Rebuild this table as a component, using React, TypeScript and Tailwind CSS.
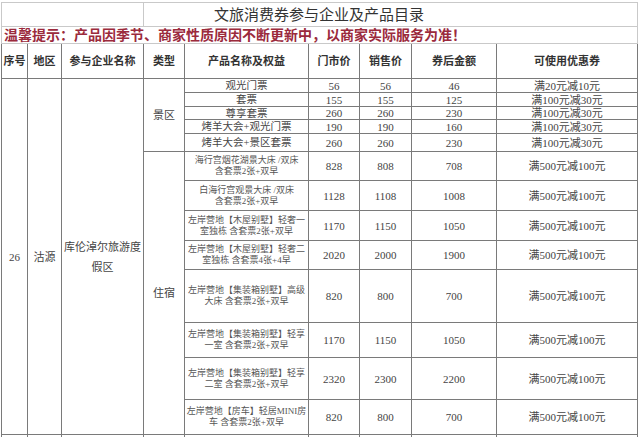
import React from 'react';

type Row = { name: string[]; market: string; sale: string; after: string; coupon: string; h: string };

const scenic: Row[] = [
  { name: ['观光门票'], market: '56', sale: '56', after: '46', coupon: '满20元减10元', h: 'h-[14px]' },
  { name: ['套票'], market: '155', sale: '155', after: '125', coupon: '满100元减30元', h: 'h-[14px]' },
  { name: ['尊享套票'], market: '260', sale: '260', after: '230', coupon: '满100元减30元', h: 'h-[13px]' },
  { name: ['烤羊大会+观光门票'], market: '190', sale: '190', after: '160', coupon: '满100元减30元', h: 'h-[14px]' },
  { name: ['烤羊大会+景区套票'], market: '260', sale: '260', after: '230', coupon: '满100元减30元', h: 'h-[18px]' },
];

const stay: Row[] = [
  { name: ['海行宫烟花湖景大床 /双床', '含套票2张+双早'], market: '828', sale: '808', after: '708', coupon: '满500元减100元', h: 'h-[29px]' },
  { name: ['白海行宫观景大床 /双床', '含套票2张+双早'], market: '1128', sale: '1108', after: '1008', coupon: '满500元减100元', h: 'h-[30px]' },
  { name: ['左岸营地【木屋别墅】轻奢一', '室独栋 含套票2张+双早'], market: '1170', sale: '1150', after: '1050', coupon: '满500元减100元', h: 'h-[30px]' },
  { name: ['左岸营地【木屋别墅】轻奢二', '室独栋 含套票4张+4早'], market: '2020', sale: '2000', after: '1900', coupon: '满500元减100元', h: 'h-[29px]' },
  { name: ['左岸营地【集装箱别墅】高级', '大床 含套票2张+双早'], market: '820', sale: '800', after: '700', coupon: '满500元减100元', h: 'h-[53px]' },
  { name: ['左岸营地【集装箱别墅】轻享', '一室 含套票2张+双早'], market: '1170', sale: '1150', after: '1050', coupon: '满500元减100元', h: 'h-[35px]' },
  { name: ['左岸营地【集装箱别墅】轻享', '二室 含套票2张+双早'], market: '2320', sale: '2300', after: '2200', coupon: '满500元减100元', h: 'h-[42px]' },
  { name: ['左岸营地【房车】轻居MINI房', '车 含套票2张+双早'], market: '820', sale: '800', after: '700', coupon: '满500元减100元', h: 'h-[35px]' },
];

const cell = 'border border-[#7a7a7a] p-0 text-center align-middle';
const num = 'text-[11px] leading-[12px] text-[#444]';

function ValueCells({ r }: { r: Row }) {
  return (
    <>
      <td className={`${cell} ${num}`}>{r.market}</td>
      <td className={`${cell} ${num}`}>{r.sale}</td>
      <td className={`${cell} ${num}`}>{r.after}</td>
      <td className={`${cell} ${num}`}>{r.coupon}</td>
    </>
  );
}

export default function App() {
  const total = scenic.length + stay.length;

  return (
    <div
      className="bg-white w-[640px] h-[437px] overflow-hidden pl-[1px] pt-[2px]"
      style={{ fontFamily: '"Liberation Serif", "Noto Sans CJK SC", serif' }}
    >
      <table className="border-collapse table-fixed w-[636px]">
        <colgroup>
          <col className="w-[26px]" />
          <col className="w-[34px]" />
          <col className="w-[82px]" />
          <col className="w-[41px]" />
          <col className="w-[124px]" />
          <col className="w-[51px]" />
          <col className="w-[52px]" />
          <col className="w-[85px]" />
          <col className="w-[141px]" />
        </colgroup>
        <tbody>
          {/* title */}
          <tr className="h-[24px]">
            <td colSpan={3} className="border border-[#c9c9c9] p-0" />
            <td colSpan={6} className="border border-[#c9c9c9] p-0 pl-[70px] text-left text-[15px] leading-[18px] text-[#333] whitespace-nowrap">
              文旅消费券参与企业及产品目录
            </td>
          </tr>
          {/* notice */}
          <tr className="h-[17px]">
            <td colSpan={9} className="border border-[#c9c9c9] p-0 pl-[2px] text-left text-[14px] leading-[15px] font-bold text-[#9b2a3c] whitespace-nowrap">
              温馨提示：产品因季节、商家性质原因不断更新中，以商家实际服务为准！
            </td>
          </tr>
          {/* header */}
          <tr className="h-[35px] text-[11px] leading-[12px] font-bold text-[#333]">
            <td className={cell}>序号</td>
            <td className={cell}>地区</td>
            <td className={cell}>参与企业名称</td>
            <td className={cell}>类型</td>
            <td className={cell}>产品名称及权益</td>
            <td className={cell}>门市价</td>
            <td className={cell}>销售价</td>
            <td className={cell}>券后金额</td>
            <td className={cell}>可使用优惠券</td>
          </tr>

          {scenic.map((r, i) => (
            <tr key={`s${i}`} className={r.h}>
              {i === 0 && (
                <>
                  <td rowSpan={total} className={`${cell} ${num}`}>26</td>
                  <td rowSpan={total} className={`${cell} ${num}`}>沽源</td>
                  <td rowSpan={total} className={`${cell} text-[11px] leading-[20px] text-[#444] px-[2px]`}>
                    库伦淖尔旅游度假区
                  </td>
                  <td rowSpan={scenic.length} className={`${cell} ${num}`}>景区</td>
                </>
              )}
              <td className={`${cell} text-[10.5px] leading-[11px] text-[#444] whitespace-nowrap`}>{r.name[0]}</td>
              <ValueCells r={r} />
            </tr>
          ))}

          {stay.map((r, i) => (
            <tr key={`h${i}`} className={r.h}>
              {i === 0 && (
                <td rowSpan={stay.length} className={`${cell} ${num}`}>住宿</td>
              )}
              <td className={`${cell} text-[9px] leading-[11px] text-[#555] whitespace-nowrap`}>
                {r.name[0]}
                <br />
                {r.name[1]}
              </td>
              <ValueCells r={r} />
            </tr>
          ))}

          <tr className="h-[20px]">
            {Array.from({ length: 9 }).map((_, i) => (
              <td key={i} className={cell} />
            ))}
          </tr>
        </tbody>
      </table>
    </div>
  );
}
